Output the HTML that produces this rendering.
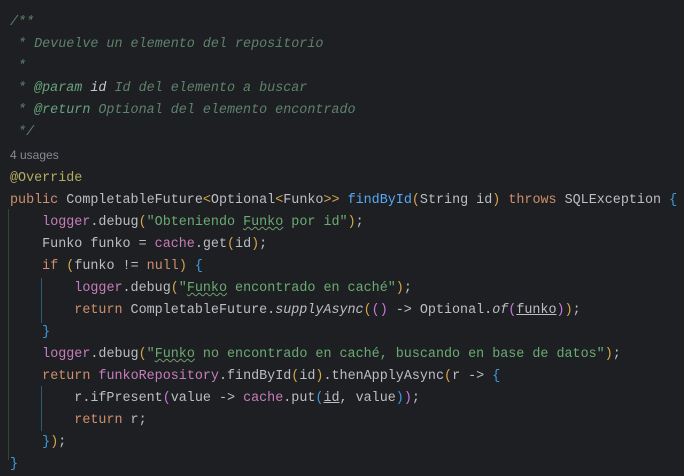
<!DOCTYPE html>
<html><head><style>
body{margin:0;background:#1e1f22;width:684px;height:460px;overflow:hidden;position:relative}
.c{position:absolute;left:10px;top:12px;font-family:"Liberation Mono",monospace;font-size:13.4px;line-height:22px;color:#bcbec4;white-space:pre}
.cm{color:#5f826b;font-style:italic}
.tg{color:#67a37c;font-style:italic}
.k{color:#cf8e6d}.m{color:#56a8f5}.s{color:#6aab73}.f{color:#c77dbb}.a{color:#b3ae60}
.y{color:#d6a64a}.b{color:#3f9bdc}.p{color:#c678dd}
.u{font-family:"Liberation Sans",sans-serif;font-size:12px;color:#868a91}
.w{text-decoration:underline wavy #6d9e6d 1px}
.ul{text-decoration:underline}
.g{position:absolute;width:1px}
</style></head><body>
<div class="g" style="left:8px;top:209px;height:251px;background:#2d4a33"></div>
<div class="g" style="left:41px;top:278px;height:45px;background:#2b5a7a"></div>
<div class="g" style="left:41px;top:386px;height:45px;background:#2b5a7a"></div>
<div class="c"><span class="cm">/**
 * Devuelve un elemento del repositorio
 *
 * <span class="tg">@param</span> <span style="color:#c7c9cf">id</span> Id del elemento a buscar
 * <span class="tg">@return</span> Optional del elemento encontrado
 */</span>
<span class="u">4 usages</span>
<span class="a">@Override</span>
<span class="k">public</span> CompletableFuture<span class="y">&lt;</span>Optional<span class="y">&lt;</span>Funko<span class="y">&gt;&gt;</span> <span class="m">findById</span><span class="y">(</span>String id<span class="y">)</span> <span class="k">throws</span> SQLException <span class="b">{</span>
    <span class="f">logger</span>.debug<span class="y">(</span><span class="s">"Obteniendo <span class="w">Funko</span> por id"</span><span class="y">)</span>;
    Funko funko = <span class="f">cache</span>.get<span class="y">(</span>id<span class="y">)</span>;
    <span class="k">if</span> <span class="y">(</span>funko != <span class="k">null</span><span class="y">)</span> <span class="b">{</span>
        <span class="f">logger</span>.debug<span class="y">(</span><span class="s">"<span class="w">Funko</span> encontrado en caché"</span><span class="y">)</span>;
        <span class="k">return</span> CompletableFuture.<i>supplyAsync</i><span class="y">(</span><span class="p">()</span> -&gt; Optional.<i>of</i><span class="p">(</span><span class="ul">funko</span><span class="p">)</span><span class="y">)</span>;
    <span class="b">}</span>
    <span class="f">logger</span>.debug<span class="y">(</span><span class="s">"<span class="w">Funko</span> no encontrado en caché, buscando en base de datos"</span><span class="y">)</span>;
    <span class="k">return</span> <span class="f">funkoRepository</span>.findById<span class="y">(</span>id<span class="y">)</span>.thenApplyAsync<span class="y">(</span>r -&gt; <span class="b">{</span>
        r.ifPresent<span class="p">(</span>value -&gt; <span class="f">cache</span>.put<span class="b">(</span><span class="ul">id</span>, value<span class="b">)</span><span class="p">)</span>;
        <span class="k">return</span> r;
    <span class="b">}</span><span class="y">)</span>;
<span class="b">}</span></div>
</body></html>
